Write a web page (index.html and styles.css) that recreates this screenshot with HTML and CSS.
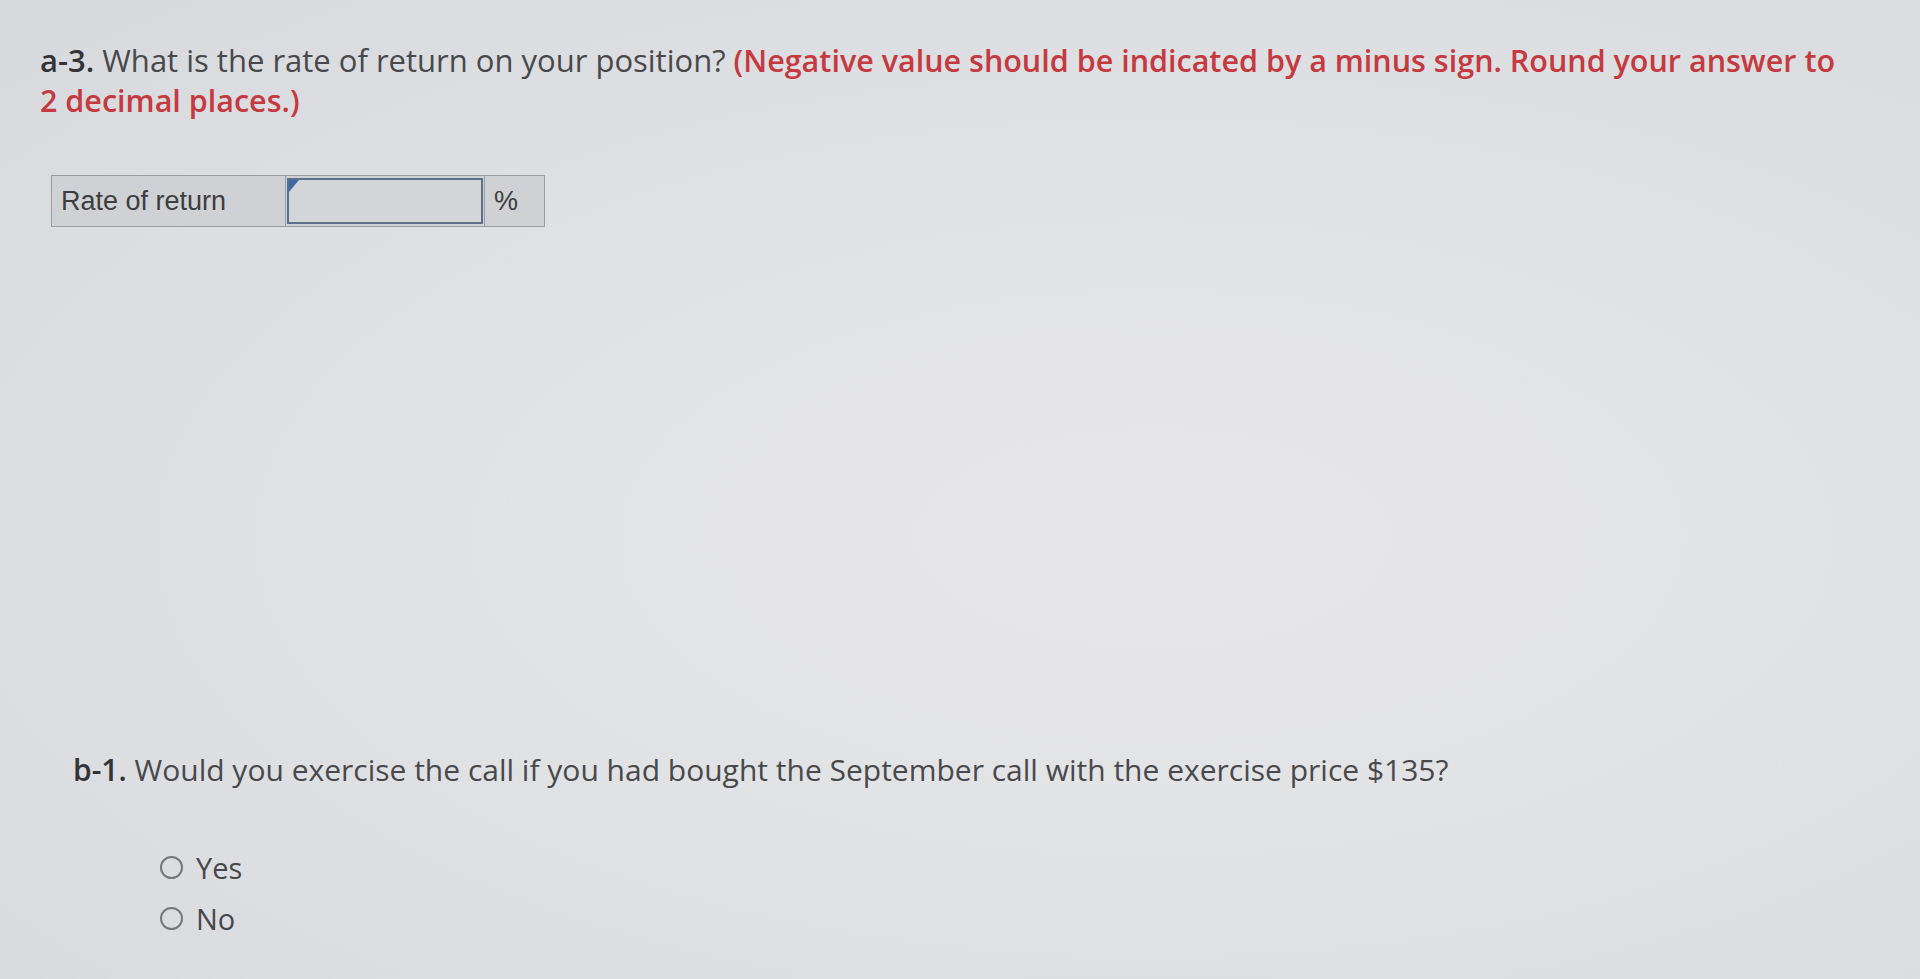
FILE: index.html
```html
<!DOCTYPE html>
<html>
<head>
<meta charset="utf-8">
<link rel="stylesheet" href="styles.css">
</head>
<body>
<div class="page">
  <p class="question q-a3"><b class="num">a-3.</b> What is the rate of return on your position? <b class="hint">(Negative value should be indicated by a minus sign. Round your answer to<br>2 decimal places.)</b></p>

  <table class="answer-table">
    <tr>
      <td class="label-cell">Rate of return</td>
      <td class="input-cell"><div class="input-box"><span class="corner"></span></div></td>
      <td class="unit-cell">%</td>
    </tr>
  </table>

  <p class="question q-b1"><b class="num">b-1.</b> Would you exercise the call if you had bought the September call with the exercise price $135?</p>

  <ul class="options">
    <li class="option"><span class="radio"></span><span class="opt-text">Yes</span></li>
    <li class="option"><span class="radio"></span><span class="opt-text">No</span></li>
  </ul>
</div>
</body>
</html>
```

FILE: styles.css
```css
html, body {
  margin: 0;
  padding: 0;
  height: 100%;
}
body {
  background: radial-gradient(ellipse at 60% 55%, #e7e7e9 0%, #e1e2e4 45%, #d8d9dd 100%);
  font-family: "Open Sans", Lato, sans-serif;
  color: #48494c;
  overflow: hidden;
}
.page {
  padding: 40px 0 0 40px;
  width: 1870px;
}
.question {
  margin: 0;
}
.q-a3 {
  font-size: 31px;
  line-height: 40px;
  white-space: nowrap;
}
.num {
  font-weight: 600;
  color: #333437;
}
.hint {
  color: #c43a40;
  font-weight: 600;
  font-size: 30.5px;
}
.answer-table {
  margin: 55px 0 0 11px;
  border-collapse: collapse;
  height: 52px;
}
.answer-table td {
  border: 1px solid #9a9da2;
  background: #cfd1d4;
  padding: 0;
  font-family: "Liberation Sans", Arial, sans-serif;
  font-size: 27px;
  color: #3d3e41;
}
.label-cell {
  width: 234px;
  padding-left: 9px !important;
  box-sizing: border-box;
}
.input-cell {
  width: 196px;
  padding: 2px 1px !important;
}
.input-box {
  position: relative;
  height: 46px;
  border: 2px solid #5b7089;
  background: #d3d6d9;
  box-sizing: border-box;
}
.corner {
  position: absolute;
  left: 0;
  top: 0;
  width: 0;
  height: 0;
  border-top: 12px solid #3c6aa8;
  border-right: 10px solid transparent;
}
.unit-cell {
  width: 60px;
  padding-left: 9px !important;
  box-sizing: border-box;
}
.q-b1 {
  margin: 524px 0 0 33px;
  font-size: 30px;
  line-height: 37px;
}
.options {
  list-style: none;
  margin: 54px 0 0 120px;
  padding: 0;
}
.option {
  display: flex;
  align-items: center;
  height: 51px;
  font-size: 29px;
}
.radio {
  width: 23px;
  height: 23px;
  border: 2px solid #75777b;
  border-radius: 50%;
  box-sizing: border-box;
  margin-right: 13px;
}
.opt-text {
  color: #46474a;
}
```
